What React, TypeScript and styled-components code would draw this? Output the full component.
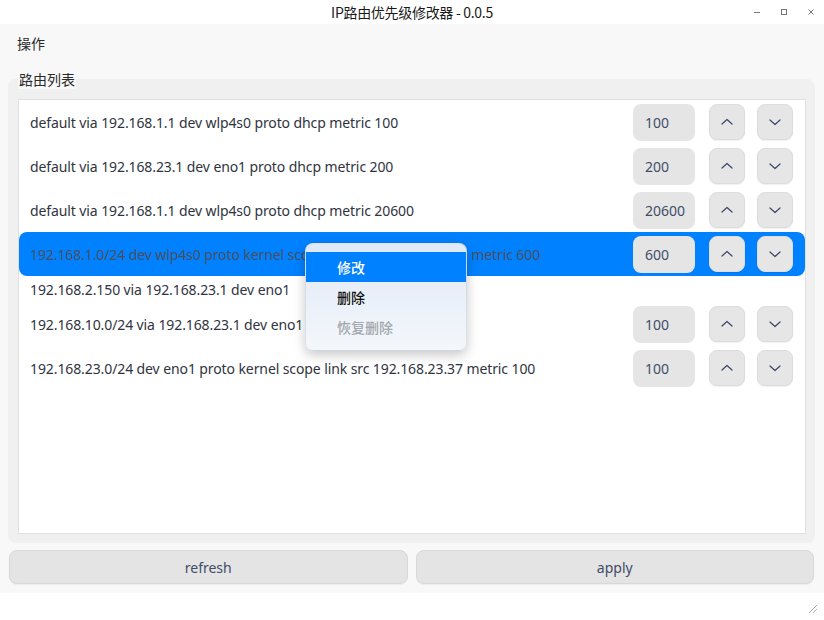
import React from "react";
import styled, { createGlobalStyle } from "styled-components";

const Global = createGlobalStyle`
  html, body { margin: 0; padding: 0; background: #ffffff; }
  body { font-family: "Noto Sans", "Noto Sans CJK SC", sans-serif; }
  * { box-sizing: border-box; }
`;

const Window = styled.div`
  position: relative;
  width: 824px;
  height: 620px;
  display: flex;
  flex-direction: column;
  background: #f8f8f8;
  overflow: hidden;
`;

const TitleBar = styled.div`
  height: 24px;
  background: #ffffff;
  display: flex;
  align-items: center;
  justify-content: center;
  position: relative;
  font-family: "Noto Sans CJK SC", "Noto Sans", sans-serif;
  font-size: 14px;
  color: #1a1a1a;
`;

const Title = styled.span`
  letter-spacing: -0.3px;
`;

const Controls = styled.div`
  position: absolute;
  right: 6px;
  top: 0;
  height: 24px;
  display: flex;
  align-items: center;
  gap: 13px;
`;

const Ctl = styled.svg`
  width: 14px;
  height: 14px;
`;

const Body = styled.div`
  flex: 1;
  display: flex;
  flex-direction: column;
  min-height: 0;
`;

const MenuBar = styled.div`
  height: 38px;
  display: flex;
  align-items: center;
  padding-left: 17px;
  font-family: "Noto Sans CJK SC", sans-serif;
  font-size: 14px;
  color: #2a2a2a;
`;

const GroupWrap = styled.div`
  flex: 1;
  display: flex;
  flex-direction: column;
  padding: 7px 9px 0 8px;
  min-height: 0;
`;

const GroupLabel = styled.div`
  align-self: flex-start;
  margin-left: 10px;
  margin-bottom: -10px;
  padding: 0 1px;
  height: 20px;
  line-height: 20px;
  background: #f8f8f8;
  font-family: "Noto Sans CJK SC", sans-serif;
  font-size: 14px;
  color: #2a2a2a;
  position: relative;
  z-index: 1;
`;

const GroupBox = styled.div`
  flex: 1;
  background: #f0f0f0;
  border-radius: 8px;
  padding: 20px 9px 9px 10px;
  display: flex;
  min-height: 0;
`;

const List = styled.div`
  flex: 1;
  background: #ffffff;
  border: 1px solid #e0e0e0;
  display: flex;
  flex-direction: column;
  overflow: hidden;
`;

const Row = styled.div<{ $selected?: boolean; $compact?: boolean }>`
  height: ${(p) => (p.$compact ? 26 : 44)}px;
  flex-shrink: 0;
  padding: 0 12px 0 11px;
  display: flex;
  align-items: center;
  border-radius: 8px;
  background: ${(p) => (p.$selected ? "#0081ff" : "transparent")};
  color: ${(p) => (p.$selected ? "#4a5060" : "#303440")};
`;

const RowText = styled.div`
  flex: 1;
  font-size: 14px;
  white-space: nowrap;
  letter-spacing: -0.1px;
`;

const Metric = styled.div`
  width: 62px;
  height: 37px;
  border-radius: 8px;
  background: #e5e5e5;
  display: flex;
  align-items: center;
  padding-left: 12px;
  font-size: 14px;
  color: #414d68;
  margin-right: 14px;
`;

const IconBtn = styled.div`
  width: 36px;
  height: 36px;
  border-radius: 8px;
  background: #e6e6e6;
  border: 1px solid #dcdcdc;
  box-shadow: 0 1px 1px rgba(0, 0, 0, 0.06);
  display: flex;
  align-items: center;
  justify-content: center;
  & + & {
    margin-left: 12px;
  }
`;

const Chevron = ({ up }: { up?: boolean }) => (
  <svg width="14" height="10" viewBox="0 0 14 10">
    <path
      d={up ? "M2 7 L7 2.5 L12 7" : "M2 3 L7 7.5 L12 3"}
      fill="none"
      stroke="#414d68"
      strokeWidth="1.3"
      strokeLinecap="round"
      strokeLinejoin="round"
    />
  </svg>
);

const ButtonBar = styled.div`
  display: flex;
  gap: 8px;
  padding: 7px 10px 9px 9px;
`;

const Button = styled.div`
  flex: 1;
  height: 34px;
  border-radius: 8px;
  background: #e4e4e4;
  border: 1px solid #d8d8d8;
  box-shadow: 0 1px 1px rgba(0, 0, 0, 0.05);
  display: flex;
  align-items: center;
  justify-content: center;
  font-size: 14px;
  color: #414d68;
`;

const StatusBar = styled.div`
  height: 27px;
  background: #ffffff;
  display: flex;
  justify-content: flex-end;
  align-items: flex-end;
  padding: 0 6px 6px 0;
`;

const Menu = styled.div`
  position: absolute;
  left: 305px;
  top: 243px;
  width: 162px;
  padding: 8px 0 8px;
  border-radius: 8px;
  background: linear-gradient(180deg, #dfe9f7 0%, #f4f7fb 100%);
  border: 1px solid rgba(0, 0, 0, 0.08);
  box-shadow: 0 4px 12px rgba(0, 0, 0, 0.22);
  z-index: 10;
`;

const MenuItem = styled.div<{ $active?: boolean; $disabled?: boolean }>`
  height: 30px;
  display: flex;
  align-items: center;
  padding-left: 31px;
  font-family: "Noto Sans CJK SC", sans-serif;
  font-size: 14px;
  font-weight: 500;
  background: ${(p) => (p.$active ? "#0081ff" : "transparent")};
  color: ${(p) => (p.$active ? "#ffffff" : p.$disabled ? "#a2a6ad" : "#111111")};
`;

type Route = { text: string; metric?: string; compact?: boolean; selected?: boolean };

const routes: Route[] = [
  { text: "default via 192.168.1.1 dev wlp4s0 proto dhcp metric 100", metric: "100" },
  { text: "default via 192.168.23.1 dev eno1 proto dhcp metric 200", metric: "200" },
  { text: "default via 192.168.1.1 dev wlp4s0 proto dhcp metric 20600", metric: "20600" },
  {
    text: "192.168.1.0/24 dev wlp4s0 proto kernel scope link src 192.168.1.100 metric 600",
    metric: "600",
    selected: true,
  },
  { text: "192.168.2.150 via 192.168.23.1 dev eno1", compact: true },
  { text: "192.168.10.0/24 via 192.168.23.1 dev eno1", metric: "100" },
  { text: "192.168.23.0/24 dev eno1 proto kernel scope link src 192.168.23.37 metric 100", metric: "100" },
];

export default function App() {
  return (
    <>
      <Global />
      <Window>
        <TitleBar>
          <Title>IP路由优先级修改器 - 0.0.5</Title>
          <Controls>
            <Ctl viewBox="0 0 14 14">
              <path d="M4 7.5 H10" stroke="#777" strokeWidth="1" />
            </Ctl>
            <Ctl viewBox="0 0 14 14">
              <rect x="4.5" y="4.5" width="5" height="5" fill="none" stroke="#777" strokeWidth="1" />
            </Ctl>
            <Ctl viewBox="0 0 14 14">
              <path d="M4.5 4.5 L9.5 9.5 M9.5 4.5 L4.5 9.5" stroke="#777" strokeWidth="1" />
            </Ctl>
          </Controls>
        </TitleBar>
        <Body>
          <MenuBar>操作</MenuBar>
          <GroupWrap>
            <GroupLabel>路由列表</GroupLabel>
            <GroupBox>
              <List>
                {routes.map((r, i) => (
                  <Row key={i} $selected={r.selected} $compact={r.compact}>
                    <RowText>{r.text}</RowText>
                    {r.metric && (
                      <>
                        <Metric>{r.metric}</Metric>
                        <IconBtn>
                          <Chevron up />
                        </IconBtn>
                        <IconBtn>
                          <Chevron />
                        </IconBtn>
                      </>
                    )}
                  </Row>
                ))}
              </List>
            </GroupBox>
          </GroupWrap>
          <ButtonBar>
            <Button>refresh</Button>
            <Button>apply</Button>
          </ButtonBar>
          <StatusBar>
            <svg width="12" height="12" viewBox="0 0 12 12">
              <path d="M11 3 L3 11 M11 7 L7 11" stroke="#b0b0b0" strokeWidth="1" />
            </svg>
          </StatusBar>
        </Body>
        <Menu>
          <MenuItem $active>修改</MenuItem>
          <MenuItem>删除</MenuItem>
          <MenuItem $disabled>恢复删除</MenuItem>
        </Menu>
      </Window>
    </>
  );
}
